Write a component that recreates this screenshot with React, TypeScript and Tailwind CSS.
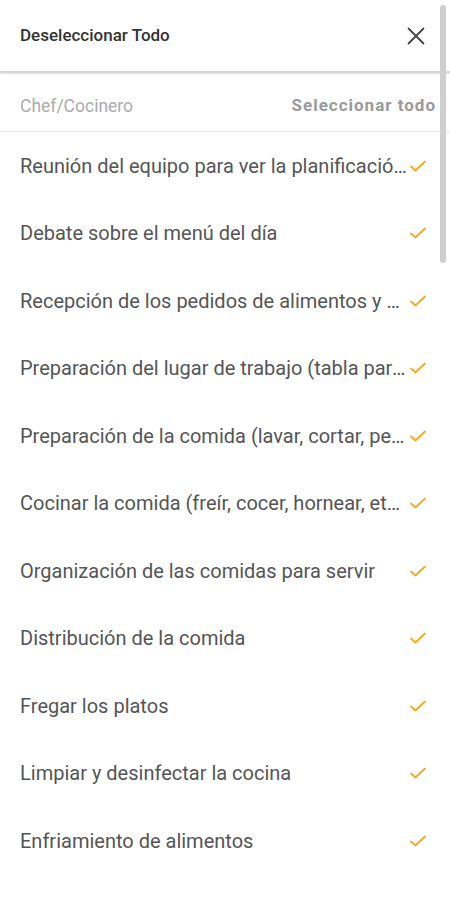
import React from "react";

const tasks = [
  "Reunión del equipo para ver la planificación del día",
  "Debate sobre el menú del día",
  "Recepción de los pedidos de alimentos y bebidas",
  "Preparación del lugar de trabajo (tabla para cortar, cuchillos)",
  "Preparación de la comida (lavar, cortar, pelar)",
  "Cocinar la comida (freír, cocer, hornear, etc.)",
  "Organización de las comidas para servir",
  "Distribución de la comida",
  "Fregar los platos",
  "Limpiar y desinfectar la cocina",
  "Enfriamiento de alimentos",
];

const Check = () => (
  <svg width="18" height="14" viewBox="0 0 18 14" fill="none" className="shrink-0">
    <path d="M2 7.5 L6.5 11.5 L16 2.5" stroke="#f5a623" strokeWidth="1.8" strokeLinecap="round" strokeLinejoin="round" />
  </svg>
);

const App: React.FC = () => {
  return (
    <div className="relative w-[450px] h-[900px] overflow-hidden bg-white font-['Roboto',sans-serif]">
      <div className="flex items-center justify-between h-[71px] pl-5 pr-[24px]">
        <span className="text-[17px] font-medium text-[#333]">Deseleccionar Todo</span>
        <svg width="20" height="20" viewBox="0 0 20 20" fill="none">
          <path d="M2.5 2.5 L17.5 17.5 M17.5 2.5 L2.5 17.5" stroke="#444" strokeWidth="1.8" strokeLinecap="round" />
        </svg>
      </div>
      <div className="h-[2px] bg-[#d6d6d6] shadow-[0_1px_2px_rgba(0,0,0,0.12)]" />
      <div className="flex items-center justify-between h-[59px] pt-[8px] pl-5 pr-[14px] border-b border-[#e6e6e6]">
        <span className="text-[17.5px] text-[#ababab]">Chef/Cocinero</span>
        <span className="text-[17px] font-bold text-[#9a9a9a] tracking-[1px]">Seleccionar todo</span>
      </div>
      <div className="flex flex-col">
        {tasks.map((t) => (
          <div key={t} className="flex items-center h-[67.5px] pl-5 pr-[23px]">
            <span className="flex-1 min-w-0 truncate text-[20px] text-[#555]">{t}</span>
            <Check />
          </div>
        ))}
      </div>
      <div className="absolute right-[4px] top-[5px] w-[6px] h-[258px] rounded-full bg-[#cfcfcf]" />
    </div>
  );
};

export default App;
